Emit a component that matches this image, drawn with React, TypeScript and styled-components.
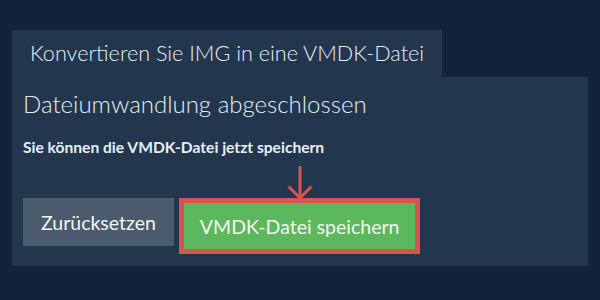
import React from "react";
import styled, { createGlobalStyle } from "styled-components";

const GlobalStyle = createGlobalStyle`
  html, body {
    margin: 0;
    padding: 0;
    background: #11233a;
  }
  body {
    font-family: Lato, "Open Sans", sans-serif;
    color: #e9eef3;
  }
`;

const Page = styled.div`
  padding: 30px 12px 0 12px;
`;

const Tab = styled.div`
  display: inline-block;
  height: 47px;
  line-height: 46px;
  padding: 0 18px;
  background: #22374e;
  font-size: 21.6px;
  font-weight: 300;
`;

const Panel = styled.div`
  width: 576px;
  height: 189px;
  box-sizing: border-box;
  padding: 12px 11px 0 11px;
  background: #22374e;
`;

const Heading = styled.h2`
  margin: 0;
  font-size: 24px;
  font-weight: 300;
  line-height: 30px;
`;

const Hint = styled.p`
  margin: 19px 0 0 0;
  font-size: 15.6px;
  font-weight: 700;
  line-height: 19px;
`;

const Actions = styled.div`
  display: flex;
  align-items: flex-start;
  gap: 5px;
  margin-top: 41px;
`;

const Button = styled.button<{ $variant: "reset" | "save" }>`
  border: none;
  margin: 0;
  height: ${(p) => (p.$variant === "save" ? "46px" : "48px")};
  padding: 0 ${(p) => (p.$variant === "save" ? "16px" : "18px")};
  font-family: Lato, "Open Sans", sans-serif;
  font-size: 19.5px;
  font-weight: 400;
  color: #f4f7f4;
  background: ${(p) => (p.$variant === "save" ? "#5cb85c" : "#4b5b6d")};
  cursor: pointer;
`;

const Highlight = styled.div`
  position: relative;
  border: 5px solid #d9534f;
  display: flex;
`;

const Arrow = styled.svg`
  position: absolute;
  left: 50%;
  top: -38px;
  transform: translateX(-50%);
`;

export default function App() {
  return (
    <>
      <GlobalStyle />
      <Page>
        <Tab>Konvertieren Sie IMG in eine VMDK-Datei</Tab>
        <Panel>
          <Heading>Dateiumwandlung abgeschlossen</Heading>
          <Hint>Sie können die VMDK-Datei jetzt speichern</Hint>
          <Actions>
            <Button $variant="reset">Zurücksetzen</Button>
            <Highlight>
              <Arrow width="28" height="36" viewBox="0 0 28 36">
                <path
                  d="M14 1 V33 M2.5 21.5 L14 33 L25.5 21.5"
                  fill="none"
                  stroke="#d9534f"
                  strokeWidth="3"
                />
              </Arrow>
              <Button $variant="save">VMDK-Datei speichern</Button>
            </Highlight>
          </Actions>
        </Panel>
      </Page>
    </>
  );
}
